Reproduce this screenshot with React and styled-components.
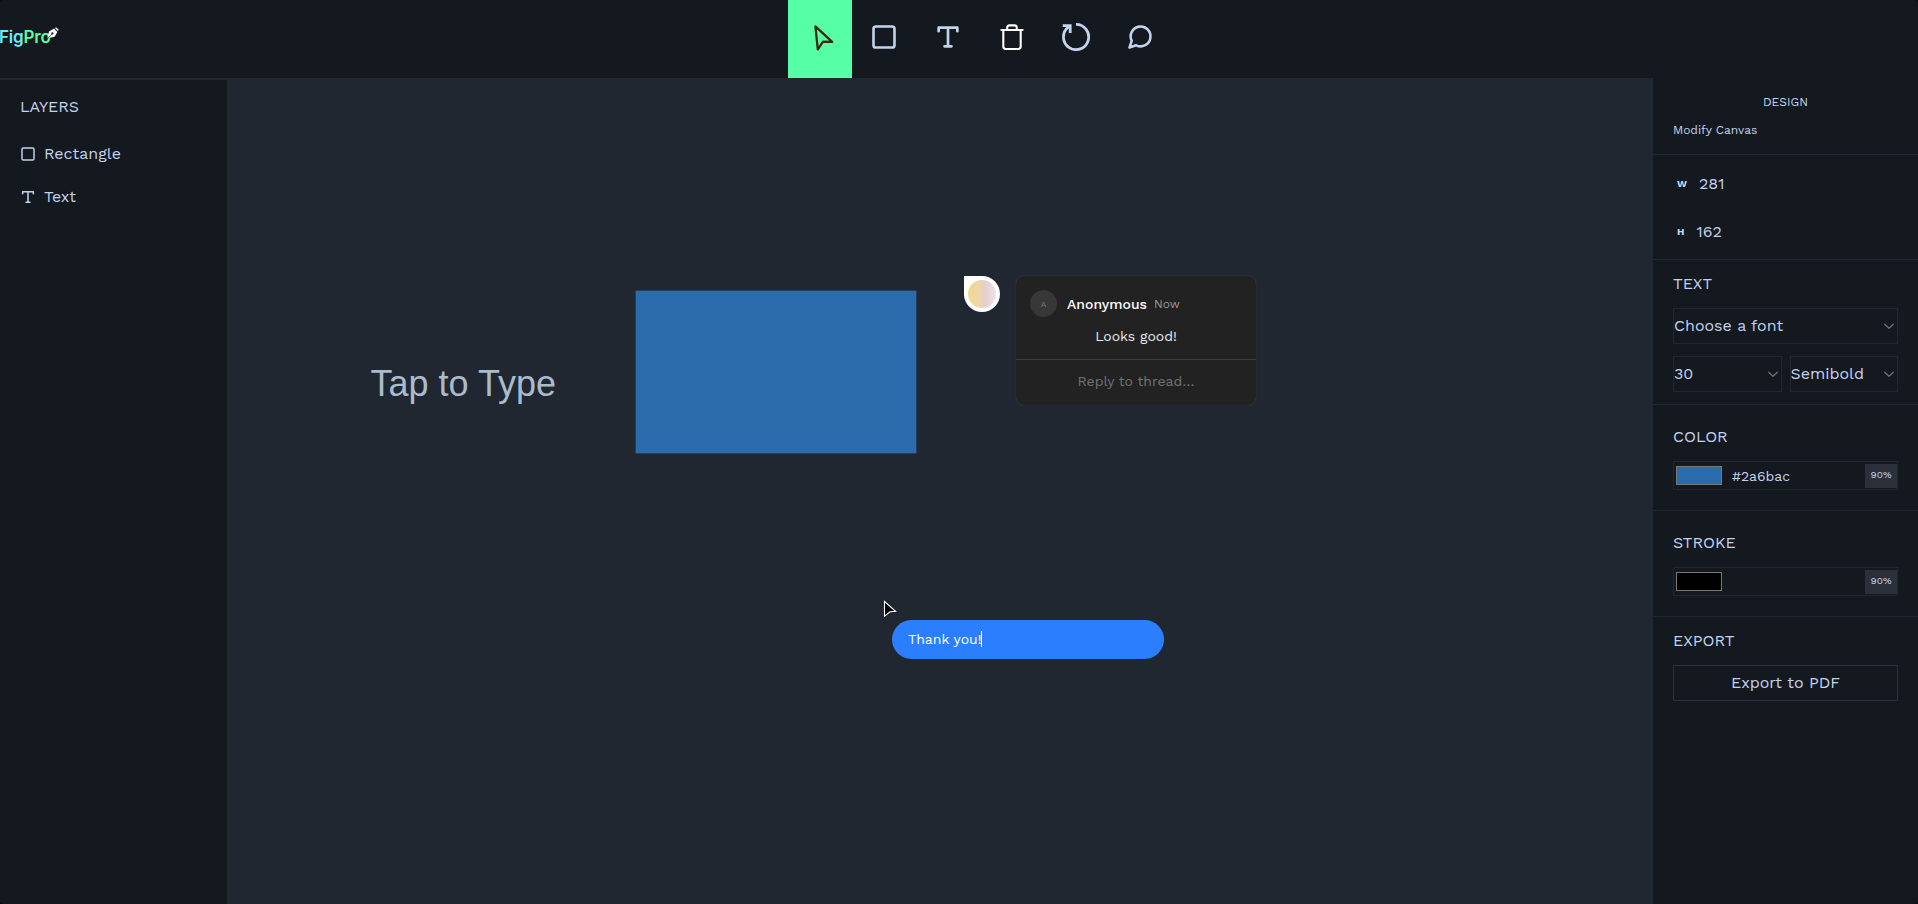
import React from "react";
import styled, { createGlobalStyle } from "styled-components";

const color = {
  ink: "#14181f",
  canvas: "#202731",
  line: "#202731",
  chip: "#2b303b",
  text: "#c4d3ed",
  green: "#56ffa6",
};

const GlobalStyle = createGlobalStyle`
  * { box-sizing: border-box; }
  html, body { margin: 0; padding: 0; background: #0b0d12; }
  body { font-family: "Work Sans", Inter, "Liberation Sans", sans-serif; color: ${color.text}; overflow: hidden; }
`;

const Shell = styled.div`
  height: 904px;
  display: flex;
  flex-direction: column;
  background: ${color.canvas};
  border-radius: 5px;
  overflow: hidden;
`;

const Label = styled.span`
  font-size: ${(p) => p.$size || 16}px;
  font-weight: ${(p) => p.$weight || 400};
  line-height: ${(p) => p.$line || 24}px;
  color: ${(p) => p.$color || "inherit"};
  white-space: nowrap;
`;

const Navbar = styled.header`
  flex: none;
  height: 78px;
  display: grid;
  grid-template-columns: 788px 384px 1fr;
  background: ${color.ink};
`;

const Logo = styled.div`
  display: flex;
  align-items: flex-start;
  padding-top: 25px;
`;

const Brand = styled(Label)`
  font-family: Inter, "Liberation Sans", sans-serif;
  letter-spacing: -0.2px;
  margin-left: ${(p) => p.$shift || 0}px;
`;

const Nib = styled.svg`
  margin: 2px 0 0 -4px;
`;

const Tools = styled.nav`
  display: flex;
`;

const Tool = styled.button`
  width: 64px;
  height: 78px;
  border: 0;
  padding: 0 0 4px;
  display: flex;
  align-items: center;
  justify-content: center;
  color: ${(p) => p.$color || color.text};
  background: ${(p) => (p.$active ? color.green : "transparent")};
`;

const Main = styled.div`
  flex: 1;
  display: flex;
  min-height: 0;
`;

const LayersPanel = styled.aside`
  width: 227px;
  flex: none;
  margin-top: 2px;
  padding: 15px 20px 0;
  background: ${color.ink};
  display: flex;
  flex-direction: column;
`;

const LayerList = styled.div`
  padding-top: 13px;
  display: flex;
  flex-direction: column;
`;

const LayerRow = styled.div`
  height: 43px;
  display: flex;
  align-items: center;
  gap: 8px;
`;

const LayerIcon = styled.span`
  display: flex;
  padding-top: 1px;
`;

const Stage = styled.main`
  position: relative;
  flex: 1;
  background: ${color.canvas};
`;

const CanvasText = styled.div`
  position: absolute;
  left: 143.5px;
  top: 286px;
  font: 36px/40px "Liberation Sans", Arial, sans-serif;
  color: #aabbcc;
  white-space: nowrap;
`;

const CanvasRect = styled.div`
  position: absolute;
  left: 409px;
  top: 213px;
  width: 280px;
  height: 162px;
  background: #2a6bac;
  box-shadow: 0 0 0 1px rgba(42, 107, 172, 0.35);
`;

const Pin = styled.div`
  position: absolute;
  left: 737px;
  top: 198px;
  width: 36px;
  height: 36px;
  display: grid;
  place-items: center;
  background: #fff;
  border-radius: 0 50% 50% 50%;
`;

const PinFace = styled.div`
  width: 28px;
  height: 28px;
  border-radius: 50%;
  background: linear-gradient(90deg, #efda8c 0%, #ecd8a8 40%, #e6ced0 62%, #ece2ec 100%);
`;

const Thread = styled.section`
  position: absolute;
  left: 789px;
  top: 198px;
  width: 240px;
  height: 129px;
  background: #222;
  border-radius: 8px;
  box-shadow: 0 0 1px rgba(255, 255, 255, 0.22);
  display: flex;
  flex-direction: column;
`;

const Comment = styled.div`
  height: 84px;
  border-bottom: 1px solid #3b3b3b;
  padding: 14px 14px 0;
  display: flex;
  flex-direction: column;
`;

const CommentHead = styled.div`
  display: flex;
  align-items: center;
  height: 27px;
`;

const Avatar = styled.div`
  width: 27px;
  height: 27px;
  margin-right: 10px;
  border-radius: 50%;
  background: #373737;
  display: grid;
  place-items: center;
`;

const When = styled(Label)`
  margin-left: 7px;
`;

const CommentBody = styled.div`
  display: flex;
  justify-content: center;
  padding-top: 7px;
`;

const Reply = styled.div`
  flex: 1;
  display: grid;
  place-items: center;
  padding-bottom: 3px;
`;

const Pointer = styled.svg`
  position: absolute;
  left: 656px;
  top: 522px;
`;

const Bubble = styled.div`
  position: absolute;
  left: 665px;
  top: 542px;
  width: 272px;
  height: 39px;
  padding: 0 0 1px 16px;
  display: flex;
  align-items: center;
  background: #2b7fff;
  border-radius: 20px;
`;

const Caret = styled.span`
  width: 1px;
  height: 16px;
  margin-left: -1px;
  background: #fff;
`;

const DesignPanel = styled.aside`
  width: 265px;
  flex: none;
  background: ${color.ink};
  display: flex;
  flex-direction: column;
`;

const Section = styled.section`
  padding: ${(p) => p.$pad || "12px"} 20px;
  display: flex;
  flex-direction: column;
  gap: 12px;
  border-bottom: ${(p) => (p.$last ? "0" : `1px solid ${color.line}`)};
`;

const PanelTitle = styled(Label)`
  align-self: ${(p) => (p.$center ? "center" : "flex-start")};
`;

const Dimensions = styled.section`
  padding: 5px 24px 3px;
  border-bottom: 1px solid ${color.line};
`;

const Dimension = styled.div`
  height: 48px;
  display: flex;
  align-items: center;
  gap: 12px;
`;

const Axis = styled(Label)`
  padding-bottom: 1px;
`;

const SelectRow = styled.div`
  display: grid;
  grid-template-columns: 1fr 1fr;
  gap: 8px;
`;

const Select = styled.div`
  height: 36px;
  padding: 0 2px 0 0;
  display: flex;
  align-items: center;
  justify-content: space-between;
  border: 1px solid ${color.line};
`;

const Swatchbox = styled.div`
  height: 29px;
  border: 1px solid ${color.line};
  padding: 0 0 0 2px;
  display: flex;
  align-items: center;
`;

const Swatch = styled.span`
  width: 46px;
  height: 19px;
  background: ${(p) => p.$fill};
  border: 1px solid #777;
`;

const Hex = styled(Label)`
  flex: 1;
  padding: 1px 0 0 10px;
`;

const Opacity = styled.span`
  width: 32px;
  height: 24px;
  display: grid;
  place-items: center;
  padding-bottom: 1px;
  background: ${color.chip};
`;

const ExportButton = styled.button`
  height: 36px;
  padding: 0;
  color: inherit;
  font-family: inherit;
  background: transparent;
  border: 1px solid ${color.chip};
`;

const Glyph = ({ size = 28, children, width = 2 }) => (
  <svg width={size} height={size} viewBox="0 0 24 24" fill="none" stroke="currentColor" strokeWidth={width} strokeLinecap="round" strokeLinejoin="round">
    {children}
  </svg>
);

const SquareIcon = ({ size }) => (
  <Glyph size={size} width={2.2}>
    <rect x="3" y="3" width="18" height="18" rx="2" />
  </Glyph>
);

const TypeIcon = ({ size, width }) => (
  <Glyph size={size} width={width}>
    <path d="M4 7V4h16v3M9 20h6M12 4v16" />
  </Glyph>
);

const CursorIcon = () => (
  <svg width="28" height="28" viewBox="0 0 28 28" fill="none" stroke="#3c2a14" strokeWidth="2.3" strokeLinejoin="round">
    <path d="M9.4 3.4 L26.2 18.9 L17 18.6 L11.8 26.4 Z" />
  </svg>
);

const TrashIcon = () => (
  <svg width="28" height="28" viewBox="0 0 28 28" fill="none" stroke="currentColor" strokeWidth="2.1" strokeLinecap="round" strokeLinejoin="round">
    <path d="M3.4 7H24.6M5.3 7V23.6Q5.3 26 7.7 26H20.3Q22.7 26 22.7 23.6V7M9.2 7V4.8Q9.2 2.4 11.6 2.4H16.4Q18.8 2.4 18.8 4.8V7" />
  </svg>
);

const ResetIcon = () => (
  <svg width="28" height="28" viewBox="0 0 28 28" fill="none" stroke="currentColor" strokeWidth="2.8">
    <path d="M14 1.4A12.6 12.6 0 1 1 5.9 4.4L8.8 2.6M0.7 2.6H8.2V10" />
  </svg>
);

const ChatIcon = () => (
  <Glyph width={2.2}>
    <path d="m3 21 1.9-5.7a8.5 8.5 0 1 1 3.8 3.8z" />
  </Glyph>
);

const Chevron = () => (
  <svg width="12" height="12" viewBox="0 0 12 12" fill="none" stroke="#6f7786" strokeWidth="1.2" strokeLinecap="round" strokeLinejoin="round">
    <path d="M1.7 4.2 L6 8.4 L10.3 4.2" />
  </svg>
);

function ColorField({ fill, hex }) {
  return (
    <Swatchbox>
      <Swatch $fill={fill} />
      <Hex $size={14}>{hex}</Hex>
      <Opacity>
        <Label $size={10} $line={16}>90%</Label>
      </Opacity>
    </Swatchbox>
  );
}

export default function App() {
  return (
    <>
      <GlobalStyle />
      <Shell>
        <Navbar>
          <Logo>
            <Brand $size={17} $weight={600} $color="#6eeaf8" $shift={-1}>Fig</Brand>
            <Brand $size={17} $weight={600} $color={color.green}>Pro</Brand>
            <Nib width="12" height="12" viewBox="0 0 12 12">
              <path d="M0.6 11.3 L2 4.6 L7 1.6 L10.4 5 L7.6 9.8 Z" fill="#fff" />
              <path d="M8 1 L9 0.2 L11.8 2.8 L10.8 4 Z" fill="#fff" />
              <path d="M0.8 11.1 L5 7" stroke={color.ink} strokeWidth="0.7" />
              <circle cx="5.4" cy="6.4" r="1.1" fill={color.ink} />
            </Nib>
          </Logo>
          <Tools>
            <Tool $active><CursorIcon /></Tool>
            <Tool><SquareIcon size={28} /></Tool>
            <Tool><TypeIcon size={28} width={2.3} /></Tool>
            <Tool $color="#fff"><TrashIcon /></Tool>
            <Tool><ResetIcon /></Tool>
            <Tool><ChatIcon /></Tool>
          </Tools>
        </Navbar>
        <Main>
          <LayersPanel>
            <Label>LAYERS</Label>
            <LayerList>
              <LayerRow>
                <LayerIcon><SquareIcon size={16} /></LayerIcon>
                <Label>Rectangle</Label>
              </LayerRow>
              <LayerRow>
                <LayerIcon><TypeIcon size={16} width={2.3} /></LayerIcon>
                <Label>Text</Label>
              </LayerRow>
            </LayerList>
          </LayersPanel>
          <Stage>
            <CanvasText>Tap to Type</CanvasText>
            <CanvasRect />
            <Pin><PinFace /></Pin>
            <Thread>
              <Comment>
                <CommentHead>
                  <Avatar><Label $size={8.5} $line={10} $color="#777">A</Label></Avatar>
                  <Label $size={14} $weight={500} $color="#fff">Anonymous</Label>
                  <When $size={12} $color="#9b9b9b">Now</When>
                </CommentHead>
                <CommentBody>
                  <Label $size={14} $color="#ebebeb">Looks good!</Label>
                </CommentBody>
              </Comment>
              <Reply>
                <Label $size={14} $color="#737373">Reply to thread…</Label>
              </Reply>
            </Thread>
            <Pointer width="14" height="18" viewBox="0 0 14 18">
              <path d="M1.5 1.5 L12.6 11.3 L7 11.8 L1.5 16.2 Z" fill="#000" stroke="#fff" strokeWidth="1.1" />
            </Pointer>
            <Bubble>
              <Label $size={14} $color="#fff">Thank you!</Label>
              <Caret />
            </Bubble>
          </Stage>
          <DesignPanel>
            <Section $pad="16px">
              <PanelTitle $center $size={12} $line={16}>DESIGN</PanelTitle>
              <PanelTitle $size={12} $line={16}>Modify Canvas</PanelTitle>
            </Section>
            <Dimensions>
              <Dimension>
                <Axis $size={10} $weight={700}>W</Axis>
                <Label>281</Label>
              </Dimension>
              <Dimension>
                <Axis $size={10} $weight={700}>H</Axis>
                <Label>162</Label>
              </Dimension>
            </Dimensions>
            <Section>
              <PanelTitle>TEXT</PanelTitle>
              <Select><Label>Choose a font</Label><Chevron /></Select>
              <SelectRow>
                <Select><Label>30</Label><Chevron /></Select>
                <Select><Label>Semibold</Label><Chevron /></Select>
              </SelectRow>
            </Section>
            <Section $pad="20px">
              <PanelTitle>COLOR</PanelTitle>
              <ColorField fill="#2a6bac" hex="#2a6bac" />
            </Section>
            <Section $pad="20px">
              <PanelTitle>STROKE</PanelTitle>
              <ColorField fill="#000" hex="" />
            </Section>
            <Section $last>
              <PanelTitle>EXPORT</PanelTitle>
              <ExportButton><Label>Export to PDF</Label></ExportButton>
            </Section>
          </DesignPanel>
        </Main>
      </Shell>
    </>
  );
}
